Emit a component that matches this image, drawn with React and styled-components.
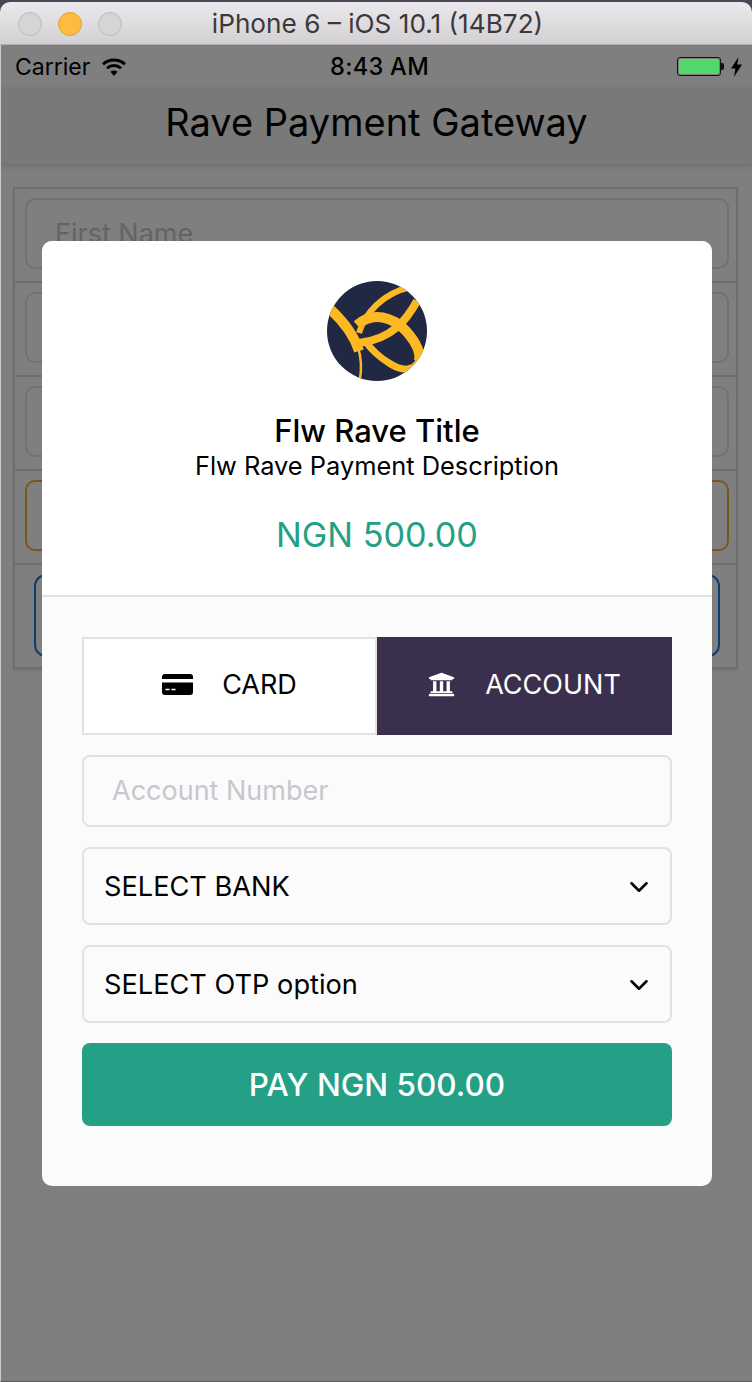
import React from 'react';
import styled, { createGlobalStyle } from 'styled-components';
import { ChevronDown } from 'lucide-react';
import { FaUniversity } from 'react-icons/fa';

const Global = createGlobalStyle`
  html, body {
    margin: 0;
    padding: 0;
    background: #4b4757;
  }
  * {
    box-sizing: border-box;
  }
  body {
    font-family: Inter, "Noto Sans", sans-serif;
    overflow: hidden;
  }
`;

const Win = styled.div`
  width: 752px;
  height: 1382px;
  padding-top: 2px;
  display: flex;
  flex-direction: column;
`;

const TitleBar = styled.div`
  height: 43px;
  flex: none;
  position: relative;
  display: flex;
  align-items: center;
  justify-content: center;
  background: linear-gradient(#ebe9eb, #d2d0d2);
  border-bottom: 1px solid #b2b0b2;
  border-radius: 10px 10px 0 0;
`;

const Lights = styled.div`
  position: absolute;
  left: 18px;
  top: 10px;
  display: flex;
  gap: 16px;
`;

const Light = styled.span`
  width: 24px;
  height: 24px;
  border-radius: 50%;
  background: ${(p) => (p.$on ? '#fdbc40' : '#d6d4d6')};
  border: 1px solid ${(p) => (p.$on ? '#e3a330' : '#bdbbbd')};
`;

const WinTitle = styled.div`
  font-size: 26.2px;
  color: #3b383b;
  padding-left: 3px;
`;

const Screen = styled.div`
  position: relative;
  flex: 1;
  background: #fff;
  border-left: 1px solid #ccc;
  border-bottom: 1px solid #555;
  overflow: hidden;
`;

const StatusBar = styled.div`
  position: relative;
  z-index: 2;
  height: 43px;
  display: grid;
  grid-template-columns: 1fr auto 1fr;
  align-items: center;
  padding: 0 10px 0 14px;
  font-size: 23px;
  color: #000;
`;

const Carrier = styled.div`
  display: flex;
  align-items: center;
  gap: 12px;
`;

const Time = styled.div`
  font-size: 23.6px;
  font-weight: 500;
  letter-spacing: 0.3px;
  padding-left: 2px;
`;

const Power = styled.div`
  display: flex;
  align-items: center;
  justify-content: flex-end;
  gap: 10px;
`;

const Battery = styled.div`
  width: 44px;
  height: 19px;
  padding: 1px;
  border: 1px solid #111;
  border-radius: 3px;
  position: relative;
  &::before {
    content: '';
    display: block;
    height: 100%;
    background: #50d86a;
    border-radius: 2px;
  }
  &::after {
    content: '';
    position: absolute;
    right: -4px;
    top: 5px;
    width: 3px;
    height: 7px;
    background: #111;
    border-radius: 0 2px 2px 0;
  }
`;

const NavBar = styled.div`
  height: 77px;
  display: flex;
  align-items: center;
  justify-content: center;
  padding-bottom: 9px;
  font-size: 38px;
  color: #000;
  background: #f3f3f3;
  border-bottom: 1px solid #e6e6e6;
  box-shadow: 0 2px 8px rgba(0, 0, 0, 0.12);
`;

const Form = styled.div`
  margin: 22px 14px 0 12px;
  border: 2px solid #dcdcdc;
  box-shadow: 0 2px 3px rgba(0, 0, 0, 0.1);
`;

const Row = styled.div`
  height: 94px;
  padding: 9px 7px 0 10px;
  border-bottom: 2px solid #dcdcdc;
`;

const ButtonRow = styled.div`
  height: 102px;
  padding: 9px 16px 0 19px;
`;

const Field = styled.div`
  height: 71px;
  display: flex;
  align-items: center;
  padding-left: 28px;
  border: 2px solid ${(p) => p.$color || '#e2e2e2'};
  border-radius: 10px;
  font-size: 27px;
  color: #c7c7cd;
`;

const SubmitOutline = styled.div`
  height: 83px;
  border: 2px solid #1a78dc;
  border-radius: 12px;
`;

const Overlay = styled.div`
  position: absolute;
  inset: 0;
  z-index: 1;
  display: flex;
  align-items: center;
  justify-content: center;
  background: rgba(0, 0, 0, 0.5);
`;

const Modal = styled.div`
  width: 670px;
  height: 945px;
  margin-left: 1px;
  background: #fbfbfb;
  border-radius: 10px;
  overflow: hidden;
  display: flex;
  flex-direction: column;
`;

const Header = styled.div`
  height: 356px;
  flex: none;
  padding-top: 40px;
  display: flex;
  flex-direction: column;
  align-items: center;
  background: #fff;
  border-bottom: 2px solid #e2e2e2;
`;

const Logo = styled.svg`
  width: 100px;
  height: 100px;
  display: block;
  margin-bottom: 30px;
`;

const Title = styled.div`
  font-size: 31px;
  line-height: 40px;
  font-weight: 500;
  color: #000;
`;

const Desc = styled.div`
  font-size: 25.4px;
  line-height: 30px;
  color: #000;
`;

const Amount = styled.div`
  margin-top: 32px;
  font-size: 34.2px;
  line-height: 44px;
  color: #23a085;
`;

const Body = styled.div`
  padding: 40px 40px 0;
  display: flex;
  flex-direction: column;
`;

const Tabs = styled.div`
  display: flex;
  height: 98px;
  margin-bottom: 20px;
`;

const Tab = styled.div`
  flex: none;
  width: 50%;
  display: flex;
  align-items: center;
  justify-content: center;
  gap: ${(p) => (p.$active ? '30px' : '29px')};
  padding-bottom: 3px;
  font-size: 27px;
  color: ${(p) => (p.$active ? '#fff' : '#000')};
  background: ${(p) => (p.$active ? '#3a304e' : '#fff')};
  border: ${(p) => (p.$active ? 'none' : '2px solid #e2e2e2')};
`;

const Input = styled.input`
  height: 72px;
  padding: 0 28px;
  margin-bottom: 20px;
  font: 27px Inter, sans-serif;
  background: #fbfbfb;
  border: 2px solid #e2e2e2;
  border-radius: 8px;
  outline: none;
  &::placeholder {
    color: #c7c7cd;
    opacity: 1;
  }
`;

const Select = styled.div`
  height: 78px;
  margin-bottom: 20px;
  padding: 2px 16px 0 20px;
  display: flex;
  align-items: center;
  justify-content: space-between;
  font-size: 27.2px;
  color: #000;
  border: 2px solid #e2e2e2;
  border-radius: 8px;
`;

const PayButton = styled.div`
  height: 83px;
  display: flex;
  align-items: center;
  justify-content: center;
  font-size: 31.5px;
  font-weight: 500;
  color: #fff;
  background: #23a085;
  border-radius: 8px;
`;

const Wifi = () => (
  <svg width="24" height="18" viewBox="0 0 24 18" fill="none" stroke="#000" strokeWidth="2.8">
    <path d="M1 6.2C7 .6 17 .6 23 6.2" />
    <path d="M5 10.2c4-3.6 10-3.6 14 0" />
    <path d="M12 18l-3.6-4.2c2-1.6 5.2-1.6 7.2 0z" fill="#000" stroke="none" />
  </svg>
);

const Bolt = () => (
  <svg width="11" height="20" viewBox="0 0 11 20">
    <path d="M7.5 0L0 11.5h4.4L3 20l8-12.5H6.2z" fill="#000" />
  </svg>
);

const CardIcon = () => (
  <svg width="31" height="21" viewBox="0 0 31 21">
    <path d="M3 0h25a3 3 0 0 1 3 3v2H0V3a3 3 0 0 1 3-3z" fill="#000" />
    <path d="M0 8.5h31V18a3 3 0 0 1-3 3H3a3 3 0 0 1-3-3z" fill="#000" />
    <path d="M3.5 15.5h4M9.5 15.5h4" stroke="#fff" strokeWidth="1.6" />
  </svg>
);

const RaveLogo = () => (
  <Logo viewBox="0 0 100 100">
    <defs>
      <clipPath id="logoClip">
        <circle cx="50" cy="50" r="50" />
      </clipPath>
    </defs>
    <circle cx="50" cy="50" r="50" fill="#212843" />
    <g clipPath="url(#logoClip)" fill="none" stroke="#fdb924">
      <path d="M3 28C16 40 27 54 32 70" strokeWidth="10" />
      <path d="M31 66C34 76 35 86 33 98" strokeWidth="2.5" />
      <path d="M32 52C38 32 56 12 84 6" strokeWidth="6" />
      <path d="M90 20C80 38 66 58 32 62" strokeWidth="8" />
      <path d="M30 44C46 30 66 36 79 50C88 60 94 70 92 80" strokeWidth="10" />
      <path d="M92 80C86 91 74 90 62 82C52 76 44 68 38 60" strokeWidth="7" />
    </g>
  </Logo>
);

export default function App() {
  return (
    <>
      <Global />
      <Win>
        <TitleBar>
          <Lights>
            <Light />
            <Light $on />
            <Light />
          </Lights>
          <WinTitle>iPhone 6 – iOS 10.1 (14B72)</WinTitle>
        </TitleBar>
        <Screen>
          <StatusBar>
            <Carrier>
              Carrier
              <Wifi />
            </Carrier>
            <Time>8:43 AM</Time>
            <Power>
              <Battery />
              <Bolt />
            </Power>
          </StatusBar>
          <NavBar>Rave Payment Gateway</NavBar>
          <Form>
            <Row>
              <Field>First Name</Field>
            </Row>
            <Row>
              <Field />
            </Row>
            <Row>
              <Field />
            </Row>
            <Row>
              <Field $color="#f0b030" />
            </Row>
            <ButtonRow>
              <SubmitOutline />
            </ButtonRow>
          </Form>
          <Overlay>
            <Modal>
              <Header>
                <RaveLogo />
                <Title>Flw Rave Title</Title>
                <Desc>Flw Rave Payment Description</Desc>
                <Amount>NGN 500.00</Amount>
              </Header>
              <Body>
                <Tabs>
                  <Tab>
                    <CardIcon />
                    CARD
                  </Tab>
                  <Tab $active>
                    <FaUniversity size={27} />
                    ACCOUNT
                  </Tab>
                </Tabs>
                <Input placeholder="Account Number" />
                <Select>
                  SELECT BANK
                  <ChevronDown size={30} strokeWidth={2} color="#000" />
                </Select>
                <Select>
                  SELECT OTP option
                  <ChevronDown size={30} strokeWidth={2} color="#000" />
                </Select>
                <PayButton>PAY NGN 500.00</PayButton>
              </Body>
            </Modal>
          </Overlay>
        </Screen>
      </Win>
    </>
  );
}
